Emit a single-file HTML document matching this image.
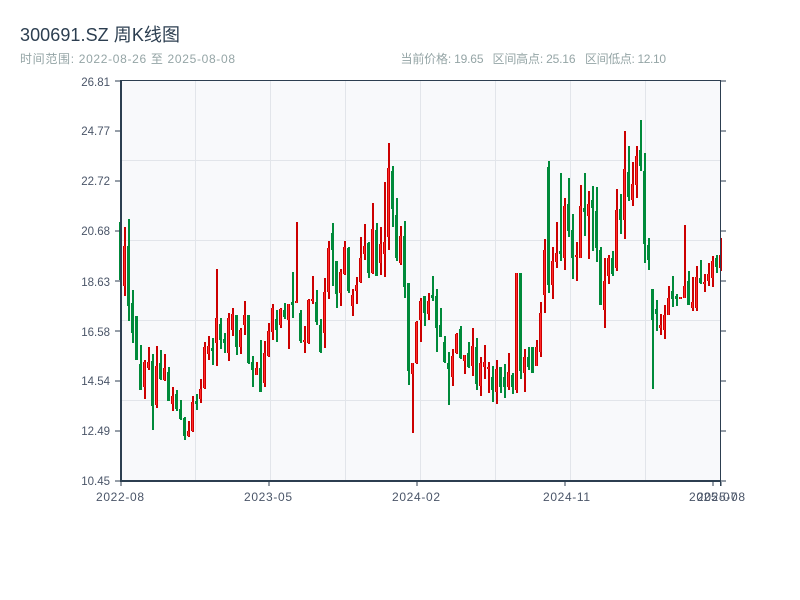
<!DOCTYPE html>
<html lang="zh"><head><meta charset="utf-8"><title>300691.SZ 周K线图</title>
<style>html,body{margin:0;padding:0;background:#fff}svg{display:block}
text{font-family:"Liberation Sans","Noto Sans CJK SC",sans-serif}</style></head>
<body>
<svg width="800" height="600" viewBox="0 0 800 600" xmlns="http://www.w3.org/2000/svg">
<defs>
<path id="rb" d="M124.5 246V286M144.5 362V387M148.5 362V368M156.5 366V405M164.5 368V380M172.5 396V404M188.5 431V436M192.5 402V431M200.5 389V399M204.5 347V388M208.5 346V354M216.5 318V343M228.5 318V353M232.5 314V330M240.5 330V347M244.5 315V325M256.5 368V375M264.5 353V383M268.5 331V356M272.5 308V332M280.5 309V325M288.5 304V320M296.5 301V303M304.5 340V342M308.5 300V343M312.5 299V301M324.5 292V333M328.5 248V292M340.5 272V293M344.5 247V274M352.5 295V306M356.5 285V291M360.5 258V282M364.5 246V254M372.5 229V273M380.5 244V263M384.5 242V254M388.5 168V237M400.5 236V263M412.5 363V374M416.5 322V363M420.5 301V320M428.5 301V314M452.5 356V377M456.5 334V353M464.5 355V361M472.5 346V366M480.5 363V386M484.5 362V367M488.5 367V369M496.5 369V392M508.5 372V387M516.5 273V390M524.5 357V373M536.5 347V366M540.5 313V352M544.5 250V295M552.5 261V285M556.5 253V262M564.5 206V258M576.5 255V257M580.5 206V258M588.5 204V216M604.5 281V310M608.5 258V276M616.5 210V268M624.5 169V220M632.5 184V200M636.5 156V185M660.5 325V328M664.5 315V330M668.5 298V315M680.5 297V299M684.5 286V298M692.5 302V308M696.5 277V308M704.5 282V284M708.5 274V281M712.5 261V278M720.5 255V268"/>
</defs>
<rect width="800" height="600" fill="#fff"/>
<text x="20" y="41" font-size="18" fill="#2c3e50" textLength="160">300691.SZ 周K线图</text>
<text x="20" y="63" font-size="12" fill="#95a5a6" textLength="215">时间范围: 2022-08-26 至 2025-08-08</text>
<text x="400.5" y="63" font-size="12" fill="#95a5a6" textLength="83">当前价格: 19.65</text>
<text x="492.5" y="63" font-size="12" fill="#95a5a6" textLength="83">区间高点: 25.16</text>
<text x="585" y="63" font-size="12" fill="#95a5a6" textLength="81">区间低点: 12.10</text>

<rect x="121" y="81" width="600" height="400" fill="#f8f9fb"/>
<path d="M195.500 81V481M270.500 81V481M345.500 81V481M420.500 81V481M495.500 81V481M570.500 81V481M645.500 81V481M121 160.500H721M121 240.500H721M121 320.500H721M121 400.500H721" stroke="#e2e5ea" stroke-width="1" fill="none"/>

<path fill="none" stroke="#cc0000" stroke-width="2" d="M125 227V296M145 360V399M149 347V370M157 346V408M165 354V381M173 387V411M189 421V437M193 396V432M201 379V403M205 342V389M209 336V360M217 269V366M229 313V361M233 308V336M241 328V354M245 301V335M257 362V375M265 341V387M269 323V357M273 304V340M281 308V328M289 304V349M297 222V303M305 326V353M309 299V344M313 276V304M325 278V348M329 241V299M341 269V306M345 241V275M353 289V316M357 277V304M361 237V283M365 224V260M373 203V274M381 227V275M385 182V277M389 143V250M401 226V265M413 363V433M417 321V364M421 298V342M429 293V320M453 349V386M457 333V354M465 355V374M473 328V376M481 357V396M485 345V379M489 362V393M497 360V404M509 353V390M517 273V393M525 349V392M537 340V366M541 302V357M545 239V313M553 247V299M557 222V268M565 198V270M577 242V281M581 185V258M589 191V259M605 258V328M609 255V284M617 189V271M625 131V239M633 162V206M637 146V198M661 314V335M665 305V339M669 286V315M681 297V299M685 225V298M693 277V311M697 266V311M705 274V292M709 263V286M713 256V287M721 238V271"/>
<use href="#rb" fill="none" stroke="#cc0000" stroke-width="3"/>
<use href="#rb" fill="none" stroke="#ff2a2a" stroke-width="1"/>

<path fill="none" stroke="#008a3a" stroke-width="2" d="M121 222V280M129 219V321M133 290V343M137 316V360M141 345V390M153 354V430M161 350V380M169 367V401M177 390V411M181 400V420M185 417V440M197 394V410M213 338V365M221 318V349M225 333V353M237 315V355M249 315V364M253 356V387M261 340V392M277 310V342M285 303V319M293 272V318M301 310V343M317 290V325M321 319V353M333 223V286M337 261V308M349 247V293M369 242V278M377 223V276M393 166V227M397 198V261M405 221V298M409 283V385M425 296V326M433 276V301M437 289V352M441 308V337M445 336V363M449 352V405M461 326V359M469 342V368M477 338V390M493 366V402M501 367V393M505 364V398M513 373V394M521 273V379M529 347V370M533 347V373M549 161V293M561 173V261M569 178V237M573 214V279M585 173V236M593 186V251M597 187V262M601 247V305M613 251V276M621 194V234M629 146V201M641 120V171M645 153V263M649 238V270M653 289V389M657 300V331M673 276V307M677 294V306M689 271V305M701 260V284M717 255V273"/>
<path fill="none" stroke="#008a3a" stroke-width="3" d="M120.500 222V280M128.500 246V306M132.500 303V333M136.500 316V360M140.500 364V390M152.500 361V406M160.500 363V379M168.500 372V401M176.500 394V409M180.500 409V419M184.500 418V436M196.500 401V404M212.500 348V351M220.500 324V340M224.500 339V343M236.500 315V347M248.500 315V363M252.500 362V370M260.500 368V392M276.500 319V330M284.500 310V317M292.500 302V305M300.500 313V341M316.500 302V322M320.500 325V352M332.500 233V250M336.500 261V294M348.500 248V291M368.500 243V273M376.500 230V276M392.500 171V209M396.500 215V258M404.500 236V287M408.500 283V371M424.500 296V313M432.500 295V298M436.500 296V328M440.500 325V337M444.500 342V362M448.500 363V369M460.500 329V358M468.500 353V367M476.500 347V384M492.500 377V390M500.500 367V387M504.500 377V387M512.500 375V387M520.500 273V371M528.500 357V367M532.500 347V373M548.500 167V285M560.500 251V254M568.500 204V231M572.500 230V258M584.500 208V212M592.500 200V208M596.500 211V248M600.500 250V305M612.500 258V274M620.500 209V220M628.500 172V197M640.500 150V166M644.500 171V244M648.500 245V260M652.500 289V320M656.500 309V314M672.500 291V299M676.500 296V299M688.500 281V305M700.500 278V283M716.500 258V267"/>

<path d="M121 80.500H721M720.500 80V486" stroke="#2c3e50" stroke-width="1" fill="none"/>
<path d="M121 80V482M120 481H721" stroke="#2c3e50" stroke-width="2" fill="none"/>
<path d="M115 81H121M115 131H121M115 181H121M115 231H121M115 281H121M115 331H121M115 381H121M115 431H121M115 481H121M721 81H726M721 131H726M721 181H726M721 231H726M721 281H726M721 331H726M721 381H726M721 431H726M721 481H726M121 482V486M269 482V486M417 482V486M565 482V486M713 482V486M721 482V486" stroke="#2c3e50" stroke-width="1" fill="none"/>

<g font-size="11.5" fill="#4a5568" text-anchor="end">
<text x="110" y="86">26.81</text><text x="110" y="135">24.77</text><text x="110" y="185">22.72</text><text x="110" y="235">20.68</text><text x="110" y="286">18.63</text><text x="110" y="336">16.58</text><text x="110" y="385">14.54</text><text x="110" y="435">12.49</text><text x="110" y="485">10.45</text>
</g>
<g font-size="12" fill="#4a5568">
<text x="96" y="501" textLength="48">2022-08</text><text x="244" y="501" textLength="48">2023-05</text><text x="392" y="501" textLength="48">2024-02</text><text x="543" y="501" textLength="47">2024-11</text><text x="689" y="501" textLength="48">2025-07</text><text x="697" y="501" textLength="48">2025-08</text>
</g>
</svg>
</body></html>
